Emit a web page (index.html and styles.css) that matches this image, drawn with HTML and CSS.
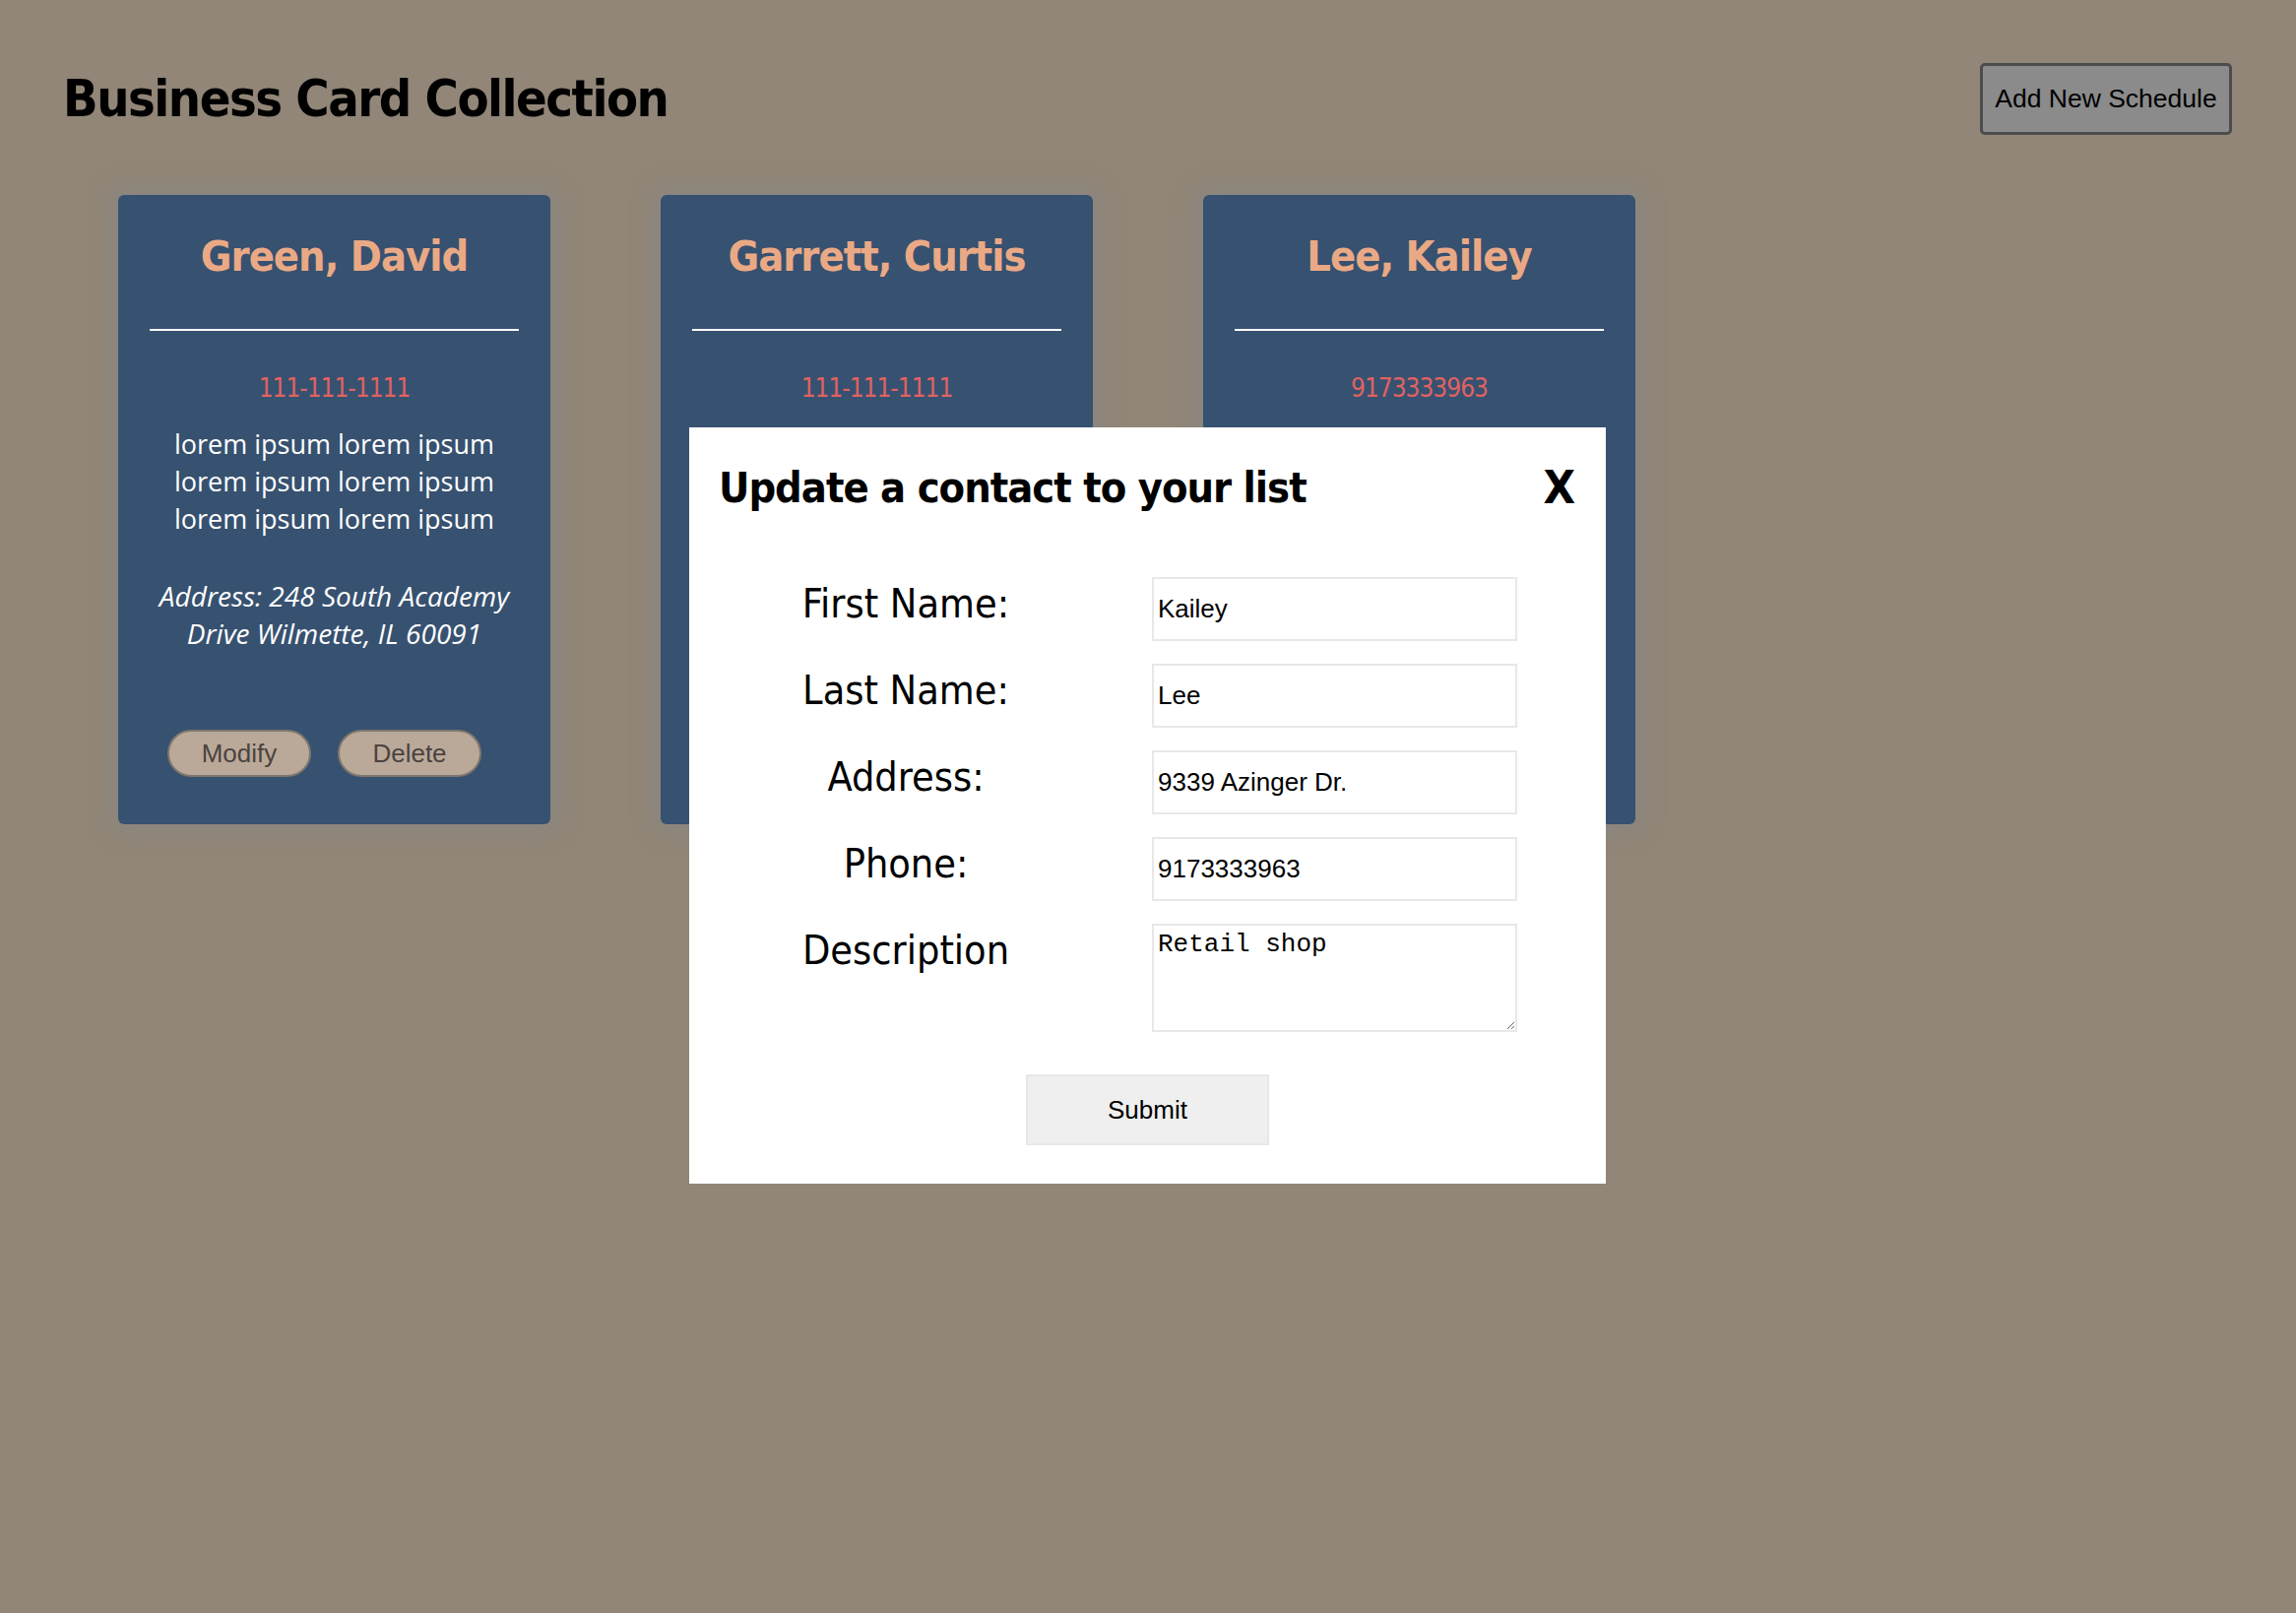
FILE: index.html
```html
<!DOCTYPE html>
<html lang="en">
<head>
<meta charset="utf-8">
<title>Business Card Collection</title>
<link rel="stylesheet" href="styles.css">
</head>
<body>
<header class="top">
  <h1 class="title">Business Card Collection</h1>
  <button class="add-btn" type="button">Add New Schedule</button>
</header>

<main class="cards">
  <section class="card">
    <h2 class="card-name">Green, David</h2>
    <hr class="card-rule">
    <p class="card-phone">111-111-1111</p>
    <p class="card-desc">lorem ipsum lorem ipsum lorem ipsum lorem ipsum lorem ipsum lorem ipsum</p>
    <p class="card-address">Address: 248 South Academy Drive Wilmette, IL 60091</p>
    <div class="card-actions">
      <button class="pill" type="button">Modify</button>
      <button class="pill" type="button">Delete</button>
    </div>
  </section>
  <section class="card">
    <h2 class="card-name">Garrett, Curtis</h2>
    <hr class="card-rule">
    <p class="card-phone">111-111-1111</p>
    <p class="card-desc">lorem ipsum lorem ipsum lorem ipsum lorem ipsum lorem ipsum lorem ipsum</p>
    <p class="card-address">Address: 248 South Academy Drive Wilmette, IL 60091</p>
    <div class="card-actions">
      <button class="pill" type="button">Modify</button>
      <button class="pill" type="button">Delete</button>
    </div>
  </section>
  <section class="card">
    <h2 class="card-name">Lee, Kailey</h2>
    <hr class="card-rule">
    <p class="card-phone">9173333963</p>
    <p class="card-desc">Retail shop</p>
    <p class="card-address">Address: 9339 Azinger Dr.</p>
    <div class="card-actions">
      <button class="pill" type="button">Modify</button>
      <button class="pill" type="button">Delete</button>
    </div>
  </section>
</main>

<div class="modal">
  <div class="modal-head">
    <h2 class="modal-title">Update a contact to your list</h2>
    <span class="modal-close">X</span>
  </div>
  <form class="modal-form">
    <label class="field-label" for="fn">First Name:</label>
    <input class="field-input" id="fn" type="text" value="Kailey">
    <label class="field-label" for="ln">Last Name:</label>
    <input class="field-input" id="ln" type="text" value="Lee">
    <label class="field-label" for="ad">Address:</label>
    <input class="field-input" id="ad" type="text" value="9339 Azinger Dr.">
    <label class="field-label" for="ph">Phone:</label>
    <input class="field-input" id="ph" type="text" value="9173333963">
    <label class="field-label" for="ds">Description</label>
    <textarea class="field-text" id="ds">Retail shop</textarea>
    <div class="submit-row">
      <button class="submit-btn" type="button">Submit</button>
    </div>
  </form>
</div>
</body>
</html>
```

FILE: styles.css
```css
* { box-sizing: border-box; }

html, body {
  margin: 0;
  padding: 0;
}

body {
  background: #918677;
  min-height: 1638px;
  font-family: "Open Sans", "DejaVu Sans", sans-serif;
  position: relative;
}

.top {
  display: flex;
  align-items: center;
  justify-content: space-between;
  padding: 64px 65px 0 64px;
  height: 137px;
}

.title {
  margin: 0;
  font-family: "DejaVu Sans Condensed", "Liberation Sans", sans-serif;
  font-weight: 700;
  font-size: 52px;
  letter-spacing: -1.5px;
  line-height: 73px;
  color: #000;
  white-space: nowrap;
}

.add-btn {
  width: 256px;
  height: 73px;
  background: #8b8b8b;
  border: 3px solid #4c4c4c;
  border-radius: 5px;
  font-family: "Liberation Sans", Arial, sans-serif;
  font-size: 26.5px;
  color: #000;
  padding: 0;
}

.cards {
  display: flex;
  gap: 112px;
  padding: 61px 0 0 120px;
  align-items: flex-start;
}

.card {
  width: 439px;
  height: 639px;
  background: #375170;
  border-radius: 6px;
  box-shadow: 0 0 22px 6px rgba(135, 135, 135, 0.75);
  padding: 30px 32px 0;
  text-align: center;
  color: #fff;
}

.card-name {
  margin: 0;
  font-family: "DejaVu Sans Condensed", "Liberation Sans", sans-serif;
  font-weight: 700;
  font-size: 43px;
  letter-spacing: -1px;
  line-height: 64px;
  color: #eaa985;
  white-space: nowrap;
}

.card-rule {
  margin: 42px 0 0;
  border: 0;
  height: 2px;
  background: #fff;
}

.card-phone {
  margin: 40px 0 0;
  font-family: "DejaVu Sans Condensed", "Liberation Sans", sans-serif;
  font-size: 26px;
  line-height: 36px;
  letter-spacing: -1px;
  color: #e06262;
}

.card-desc {
  margin: 20px auto 0;
  width: 340px;
  font-size: 27px;
  line-height: 38px;
}

.card-address {
  margin: 40px 0 0;
  font-style: italic;
  font-size: 28px;
  line-height: 38px;
}

.card-actions {
  display: flex;
  justify-content: center;
  gap: 27px;
  padding-right: 20px;
  margin-top: 79px;
}

.pill {
  width: 146px;
  height: 48px;
  border-radius: 24px;
  background: #baa999;
  border: 2px solid #7e766e;
  font-family: "Liberation Sans", Arial, sans-serif;
  font-size: 26px;
  color: #4b4340;
  padding: 0;
}

.modal {
  position: absolute;
  left: 700px;
  top: 434px;
  width: 931px;
  background: #fff;
  padding: 31px 31px 39px 30px;
}

.modal-head {
  display: flex;
  justify-content: space-between;
  align-items: center;
  height: 60px;
}

.modal-title {
  margin: 0;
  font-family: "DejaVu Sans Condensed", "Liberation Sans", sans-serif;
  font-weight: 700;
  font-size: 43px;
  letter-spacing: -1px;
  line-height: 60px;
  color: #000;
}

.modal-close {
  font-family: "DejaVu Sans Condensed", "Liberation Sans", sans-serif;
  font-weight: 700;
  font-size: 47px;
  line-height: 60px;
  color: #000;
}

.modal-form {
  display: grid;
  grid-template-columns: 380px 371px;
  column-gap: 60px;
  row-gap: 23px;
  margin-top: 61px;
}

.field-label {
  text-align: center;
  font-family: "DejaVu Sans Condensed", "Liberation Sans", sans-serif;
  font-size: 41px;
  line-height: 54px;
  color: #000;
}

.field-input {
  height: 65px;
  width: 371px;
  border: 2px solid #e8e8e8;
  padding: 0 4px;
  font-family: "Liberation Sans", Arial, sans-serif;
  font-size: 26px;
  color: #000;
  background: #fff;
  margin: 0;
}

.field-text {
  height: 110px;
  width: 371px;
  border: 2px solid #e8e8e8;
  padding: 4px 4px;
  font-family: "Liberation Mono", monospace;
  font-size: 26px;
  line-height: 30px;
  color: #000;
  margin: 0;
  display: block;
}

.submit-row {
  grid-column: 1 / -1;
  display: flex;
  justify-content: center;
  margin-top: 20px;
  margin-left: -30px;
  margin-right: -90px;
}

.submit-btn {
  width: 247px;
  height: 72px;
  background: #efefef;
  border: 2px solid #e8e8e8;
  font-family: "Liberation Sans", Arial, sans-serif;
  font-size: 26px;
  color: #000;
  padding: 0;
}
```
